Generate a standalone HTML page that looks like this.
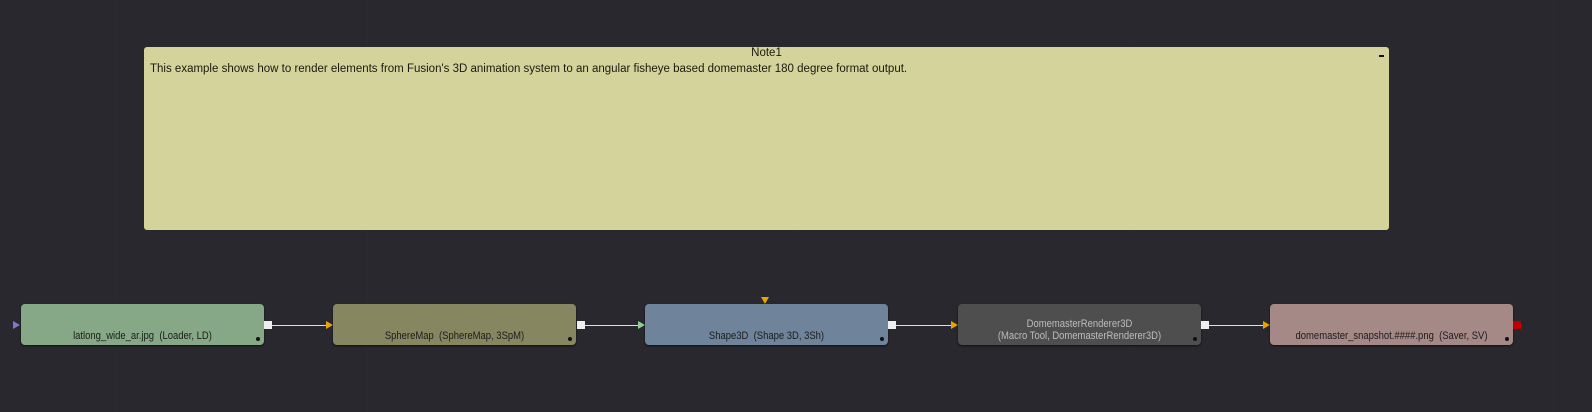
<!DOCTYPE html>
<html><head><style>
body{margin:0;width:1592px;height:412px;background:#28282e;position:relative;overflow:hidden;font-family:"Liberation Sans","DejaVu Sans",sans-serif;}
.g{position:absolute;background:#2a2a31}
.note{position:absolute;left:144px;top:47px;width:1245px;height:183px;background:#d4d39b;border-radius:3px;color:#1a1a10;font-size:11.5px}
.n{position:absolute;top:304px;width:243px;height:41px;border-radius:4px;box-shadow:0 1px 2px rgba(0,0,0,.6);font-size:11px;color:#1c1c1c;text-align:center}
.n .t{position:absolute;left:-20px;right:-20px;bottom:3px;line-height:12px;transform:scaleX(0.86)}
.n .d{position:absolute;right:4px;bottom:4px;width:4px;height:4px;border-radius:50%;background:#111}
.sq{position:absolute;top:321px;width:8px;height:8px;background:#eee}
.ln{position:absolute;top:325px;height:1px;background:#ddd}
.tri{position:absolute;top:321px;width:0;height:0;border-top:4px solid transparent;border-bottom:4px solid transparent;border-left:7px solid #e8a400}
</style></head><body>
<div class="g" style="left:115px;top:0;width:1px;height:412px"></div>
<div class="g" style="left:367px;top:0;width:1px;height:412px"></div>
<div class="g" style="left:797px;top:0;width:1px;height:412px"></div>
<div class="g" style="left:1130px;top:0;width:1px;height:412px"></div>
<div class="g" style="left:1553px;top:0;width:1px;height:412px"></div>
<div class="note">
<div style="position:absolute;left:0;right:0;top:0;text-align:center;line-height:12px">Note1</div>
<div style="position:absolute;left:6px;top:16px;line-height:12px;white-space:nowrap">This example shows how to render elements from Fusion's 3D animation system to an angular fisheye based domemaster 180 degree format output.</div>
<div style="position:absolute;right:5px;top:8px;width:5px;height:2px;background:#111"></div>
</div>
<div class="tri" style="left:13px;border-left-color:#7a78d0"></div>
<div class="n" style="left:21px;background:#86a887"><div class="t">latlong_wide_ar.jpg&nbsp; (Loader, LD)</div><div class="d"></div></div>
<div class="sq" style="left:264px"></div><div class="ln" style="left:272px;width:54px"></div><div class="tri" style="left:326px"></div>
<div class="n" style="left:333px;background:#868760"><div class="t">SphereMap&nbsp; (SphereMap, 3SpM)</div><div class="d"></div></div>
<div class="sq" style="left:577px"></div><div class="ln" style="left:585px;width:53px"></div><div class="tri" style="left:638px;border-left-color:#8fd08f"></div>
<div style="position:absolute;left:761px;top:297px;border-left:4px solid transparent;border-right:4px solid transparent;border-top:7px solid #e8a400"></div>
<div class="n" style="left:645px;background:#6f839a"><div class="t">Shape3D&nbsp; (Shape 3D, 3Sh)</div><div class="d"></div></div>
<div class="sq" style="left:888px"></div><div class="ln" style="left:896px;width:55px"></div><div class="tri" style="left:951px"></div>
<div class="n" style="left:958px;background:#4e4e4e;color:#bcbcbc"><div class="t">DomemasterRenderer3D<br>(Macro Tool, DomemasterRenderer3D)</div><div class="d"></div></div>
<div class="sq" style="left:1201px"></div><div class="ln" style="left:1209px;width:54px"></div><div class="tri" style="left:1263px"></div>
<div class="n" style="left:1270px;background:#a58987"><div class="t">domemaster_snapshot.####.png&nbsp; (Saver, SV)</div><div class="d"></div></div>
<div class="sq" style="left:1513px;background:#c00000"></div>
</body></html>
